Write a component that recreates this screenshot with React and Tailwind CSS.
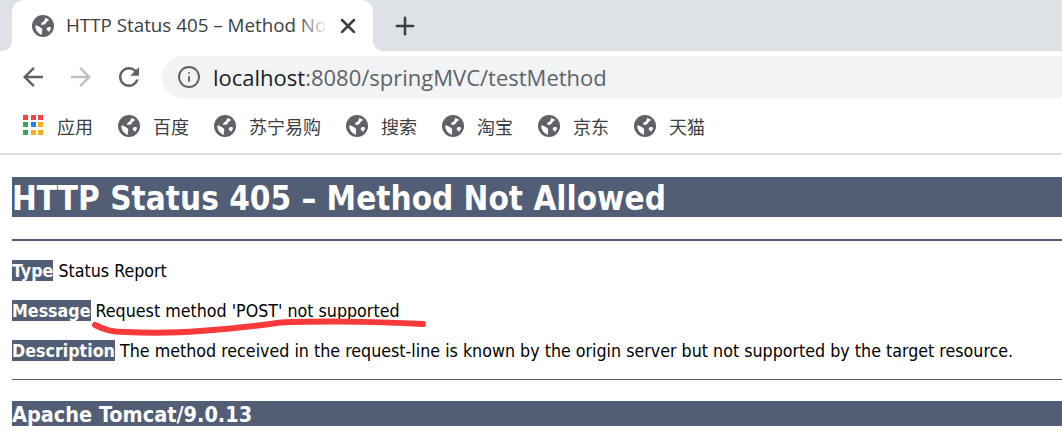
import React from "react";
import { Info, X, Plus } from "lucide-react";

const uiFont = "font-['Open_Sans','Noto_Sans_CJK_SC',sans-serif]";
const pageFont = "font-['DejaVu_Sans_Condensed','DejaVu_Sans',sans-serif]";

const bookmarks = ["百度", "苏宁易购", "搜索", "淘宝", "京东", "天猫"];

function Globe({ className }) {
    return (
        <svg viewBox="0 0 22 22" className={className}>
            <circle cx="11" cy="11" r="11" fill="#5f6368" />
            <path
                d="M13 3c1.500.2 3 .9 4 1.800-.6 1.200-1.800 1.400-2.500 2.200-.7.900-.7 2.100-1.900 2.500-1.300.4-2.600-.2-3.500.5-.4-1.400.9-2.500 2.100-3.200 1.200-.8 1.900-2 1.800-3.800zM3.400 10.500c1.600-.2 3 .4 4.200 1.500 1 .9 2.300 1.100 2.600 2.400.3 1.100-.3 2-.4 3.100 0 .9.100 1.600.500 2.300-3.700-.7-6.500-3.900-6.900-7.800zM15.500 12.500c1.300-.6 2.700-.5 3.600.2-.3 1.600-1 3-2.200 4.100-.5-.9-1.200-1.300-1.800-1.900-.6-.700-.5-1.900.4-2.400z"
                fill="#ffffff"
            />
        </svg>
    );
}

function NavIcon({ d, className }) {
    return (
        <svg viewBox="0 0 24 24" fill="currentColor" className={`w-[30px] h-[30px] ${className}`}>
            <path d={d} />
        </svg>
    );
}

const backPath = "M20 11H7.83l5.59-5.59L12 4l-8 8 8 8 1.41-1.41L7.83 13H20v-2z";
const forwardPath = "M4 11h12.17l-5.59-5.59L12 4l8 8-8 8-1.41-1.41L16.170 13H4v-2z";
const reloadPath =
    "M17.65 6.35C16.2 4.9 14.21 4 12 4c-4.42 0-7.99 3.58-7.99 8s3.57 8 7.99 8c3.73 0 6.84-2.55 7.73-6h-2.08c-.82 2.33-3.04 4-5.65 4-3.31 0-6-2.69-6-6s2.69-6 6-6c1.66 0 3.14.69 4.22 1.78L13 11h7V4l-2.35 2.35z";

function Apps() {
    const colors = [
        "bg-[#ef4444]", "bg-[#ef4444]", "bg-[#ef4444]",
        "bg-[#34a853]", "bg-[#1e88e5]", "bg-[#fbac18]",
        "bg-[#34a853]", "bg-[#fbac18]", "bg-[#fbac18]",
    ];
    return (
        <div className="grid grid-cols-3 gap-[2.5px] w-[20px] mb-[5px]">
            {colors.map((c, i) => (
                <span key={i} className={`w-[5px] h-[5px] ${c}`} />
            ))}
        </div>
    );
}

function Label({ children }) {
    return <b className="bg-[#525d76] text-white font-bold pt-px">{children}</b>;
}

function Chrome() {
    return (
        <div className={uiFont}>
            <div className="h-[51px] bg-[#dee1e6] flex items-end pl-[12px]">
                <div className="relative w-[361px] h-[51px] bg-white rounded-t-[12px] flex items-center pl-[20px]">
                    <span className="absolute -left-[10px] bottom-0 w-[10px] h-[10px] bg-white">
                        <span className="block w-full h-full bg-[#dee1e6] rounded-br-[10px]" />
                    </span>
                    <span className="absolute -right-[10px] bottom-0 w-[10px] h-[10px] bg-white">
                        <span className="block w-full h-full bg-[#dee1e6] rounded-bl-[10px]" />
                    </span>
                    <Globe className="w-[22px] h-[22px] shrink-0" />
                    <div className="relative ml-[12px] w-[262px] overflow-hidden whitespace-nowrap text-[18.8px] text-[#3c4043]">
                        HTTP Status 405 – Method Not Allowed
                        <span className="absolute right-0 top-0 h-full w-[32px] bg-gradient-to-r from-transparent to-white" />
                    </div>
                    <X className="w-[24px] h-[24px] ml-[8px] text-[#3c4043]" strokeWidth={2.5} />
                </div>
                <Plus className="w-[28px] h-[28px] ml-[18px] mb-[11px] text-[#3c4043]" strokeWidth={2.2} />
            </div>

            <div className="h-[52px] flex items-center gap-[18px] pl-[18px]">
                <NavIcon d={backPath} className="text-[#5f6368]" />
                <NavIcon d={forwardPath} className="text-[#bdc1c6]" />
                <NavIcon d={reloadPath} className="text-[#5f6368]" />
                <div className="flex-1 h-[42px] bg-[#f1f3f4] rounded-l-[21px] flex items-center pl-[15px]">
                    <Info className="w-[24px] h-[24px] text-[#5f6368]" strokeWidth={1.9} />
                    <span className="ml-[12px] text-[22px] text-[#5f6368]">
                        <span className="text-[#202124]">localhost</span>:8080/springMVC/testMethod
                    </span>
                </div>
            </div>

            <div className="h-[50px] pb-[2px] flex items-center text-[18px] text-[#3c4043] pl-[23px]">
                <Apps />
                <span className="ml-[14px]">应用</span>
                {bookmarks.map((b) => (
                    <div key={b} className="flex items-center ml-[25px]">
                        <Globe className="w-[22px] h-[22px] mb-[2px]" />
                        <span className="ml-[13px]">{b}</span>
                    </div>
                ))}
            </div>
            <div className="h-[2px] bg-[#dadce0]" />
        </div>
    );
}

export default function App() {
    return (
        <div className="w-[1062px] h-[438px] bg-white overflow-hidden">
            <Chrome />
            <div className={`relative px-[12px] pt-[22px] text-black ${pageFont}`}>
                <h1 className="bg-[#525d76] text-white font-bold text-[33px] pt-[4px] leading-[36px] -mr-[12px] whitespace-nowrap">
                    HTTP Status 405 – Method Not Allowed
                </h1>
                <hr className="mt-[22px] -mr-[12px] border-0 h-[2px] bg-[#525d76]" />
                <p className="mt-[19px] text-[17.7px] leading-[22px] whitespace-nowrap">
                    <Label>Type</Label> Status Report
                </p>
                <p className="mt-[18px] text-[17.7px] leading-[22px] whitespace-nowrap">
                    <Label>Message</Label> Request method 'POST' not supported
                </p>
                <p className="mt-[18px] text-[17.7px] leading-[22px] whitespace-nowrap">
                    <Label>Description</Label> The method received in the request-line is known by the origin server but not supported by the target resource.
                </p>
                <hr className="mt-[17px] -mr-[12px] border-0 h-px bg-[#525d76]" />
                <h3 className="mt-[21px] bg-[#525d76] text-white font-bold text-[21.500px] pt-[2px] leading-[23px] -mr-[12px]">
                    Apache Tomcat/9.0.13
                </h3>
                {/* red marker stroke drawn over the screenshot */}
                <svg className="absolute left-0 top-0 w-[440px] h-[190px] pointer-events-none" viewBox="0 0 440 190">
                    <path
                        d="M95 170 C105 175 112 177 125 177 C150 178 175 178 200 176 C225 174 250 172 277 168 C300 166 370 166 423 169"
                        fill="none"
                        stroke="#f93a3a"
                        strokeWidth="6"
                        strokeLinecap="round"
                    />
                </svg>
            </div>
        </div>
    );
}
